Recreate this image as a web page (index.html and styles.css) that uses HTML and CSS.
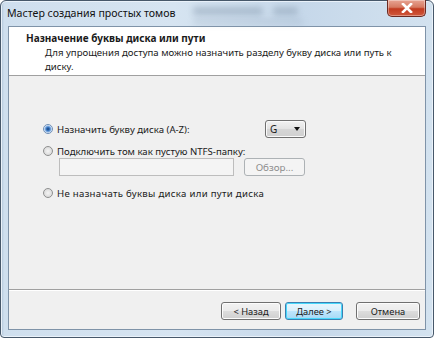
FILE: index.html
```html
<!DOCTYPE html>
<html>
<head>
<meta charset="utf-8">
<link rel="stylesheet" href="styles.css">
</head>
<body>
<div class="window">
  <div class="titlebar">
    <span class="title">Мастер создания простых томов</span>
    <span class="blur b1"></span>
    <span class="blur b2"></span>
    <span class="blur b3"></span>
    <span class="close"><svg width="14" height="10" viewBox="0 0 14 10"><path d="M3 1 L11 9 M11 1 L3 9" stroke="#fff" stroke-width="2.6" stroke-linecap="square"/></svg></span>
  </div>
  <div class="client">
    <div class="header">
      <div class="h-title">Назначение буквы диска или пути</div>
      <div class="h-sub">Для упрощения доступа можно назначить разделу букву диска или путь к диску.</div>
    </div>
    <div class="body">
      <div class="row r1">
        <label class="opt"><span class="radio checked"></span>Назначить букву диска (A-Z):</label>
        <span class="combo">G<span class="arrow"></span></span>
      </div>
      <label class="opt r2"><span class="radio"></span>Подключить том как пустую NTFS-папку:</label>
      <div class="row r2b">
        <span class="textbox"></span>
        <span class="btn disabled">Обзор...</span>
      </div>
      <label class="opt r3"><span class="radio"></span>Не назначать буквы диска или пути диска</label>
    </div>
    <div class="footer">
      <span class="btn back">&lt; Назад</span>
      <span class="btn default">Далее &gt;</span>
      <span class="btn cancel">Отмена</span>
    </div>
  </div>
</div>
</body>
</html>
```
FILE: styles.css
```css
* { box-sizing: border-box; }
html, body { margin: 0; padding: 0; }
body { width: 434px; height: 338px; overflow: hidden; font-family: "Noto Sans", "Liberation Sans", sans-serif; font-size: 9.6px; color: #1a1a1a; }
.window {
  width: 434px; height: 338px;
  display: flex; flex-direction: column;
  padding: 0 7px 7px 7px;
  background: linear-gradient(90deg, #a9bfd4 0px, #cfdfee 3px, #d6e4f1 40%, #c6d8ea 70%, #d3e2ef 100%);
  border: 1px solid #47586a;
  border-radius: 6px 6px 4px 4px;
  box-shadow: inset 0 0 0 1px #eaf2fa;
}
.titlebar { height: 25px; display: flex; align-items: center; position: relative; }
.title { font-size: 10.6px; color: #111; margin-left: -1px; margin-top: -2px; }
.blur { position: absolute; filter: blur(3px); background: #7f93a8; opacity: .45; border-radius: 3px; }
.b1 { left: 185px; top: 6px; width: 70px; height: 8px; }
.b2 { left: 265px; top: 6px; width: 25px; height: 8px; }
.b3 { left: 185px; top: 18px; width: 110px; height: 5px; opacity: .25; }
.close {
  position: absolute; right: 0px; top: -1px; width: 39px; height: 17px;
  border: 1px solid #6b2a22; border-top: none; border-radius: 0 0 5px 5px;
  background: linear-gradient(#e8a493 0%, #d67a62 45%, #c23a1f 55%, #d0593c 100%);
  display: flex; align-items: center; justify-content: center;
  box-shadow: inset 0 0 0 1px rgba(255,255,255,.35);
}
.client {
  flex: 1; display: flex; flex-direction: column;
  background: #f0f0f0;
  border: 1px solid #7f93a8;
}
.header {
  height: 49px; background: #fff; border-bottom: 1px solid #a0a0a0;
  padding: 5px 0 0 17px;
}
.h-title { font-weight: bold; font-size: 10px; line-height: 12px; }
.h-sub { margin: 2px 0 0 19px; line-height: 14px; width: 350px; }
.body { flex: 1; padding: 44px 0 0 34px; display: flex; flex-direction: column; }
.row { display: flex; align-items: center; }
.opt { display: flex; align-items: center; height: 14px; white-space: nowrap; }
.radio {
  width: 10px; height: 10px; border-radius: 50%; margin-right: 4px; flex: none;
  border: 1px solid #8e8f8f;
  background: radial-gradient(circle, #f4f4f4 0, #dcdcdc 70%);
}
.radio.checked { background: radial-gradient(circle, #1b3e73 0, #2f6db8 1.5px, #8ab4e6 3px, #eef3f9 4px); border-color: #6f8fb6; }
.r1 { justify-content: space-between; width: 263px; }
.combo {
  width: 41px; height: 18px; border: 1px solid #707070; border-radius: 3px;
  background: linear-gradient(#f2f2f2, #e3e3e3 50%, #d6d6d6 51%, #d0d0d0);
  display: flex; align-items: center; justify-content: space-between; padding: 0 5px 0 4px; font-size: 10px;
  box-shadow: inset 0 0 0 1px #fafafa;
}
.arrow { width: 0; height: 0; border-left: 3.5px solid transparent; border-right: 3.5px solid transparent; border-top: 4px solid #111; }
.r2 { margin-top: 6px; }
.r2b { margin: 0 0 0 16px; gap: 10px; }
.textbox { width: 175px; height: 18px; border: 1px solid #bdbdbd; background: #f4f4f4; }
.btn {
  display: flex; align-items: center; justify-content: center;
  width: 60px; height: 18px; border: 1px solid #707070; border-radius: 3px;
  background: linear-gradient(#f2f2f2, #ebebeb 50%, #dddddd 51%, #cfcfcf);
  box-shadow: inset 0 0 0 1px #fcfcfc;
  font-size: 9.3px;
}
.btn.disabled { width: 61px; height: 18px; border-color: #adb2b5; background: #f4f4f4; color: #8d8d8d; box-shadow: none; font-size: 9.8px; }
.r3 { margin-top: 10px; letter-spacing: 0.3px; }
.footer {
  height: 40px; border-top: 1px solid #a0a0a0; box-shadow: inset 0 1px 0 #fff;
  display: flex; align-items: center; justify-content: flex-end; padding: 3px 5px 0 0; gap: 4px;
}
.btn.default { width: 58px; border-color: #3c7fb1; box-shadow: inset 0 0 0 1px #48d8fb; background: linear-gradient(#eaf6fd, #d9f0fc 50%, #bee6fd 51%, #a7d9f5); }
.btn.cancel { margin-left: 9px; width: 64px; }
```
